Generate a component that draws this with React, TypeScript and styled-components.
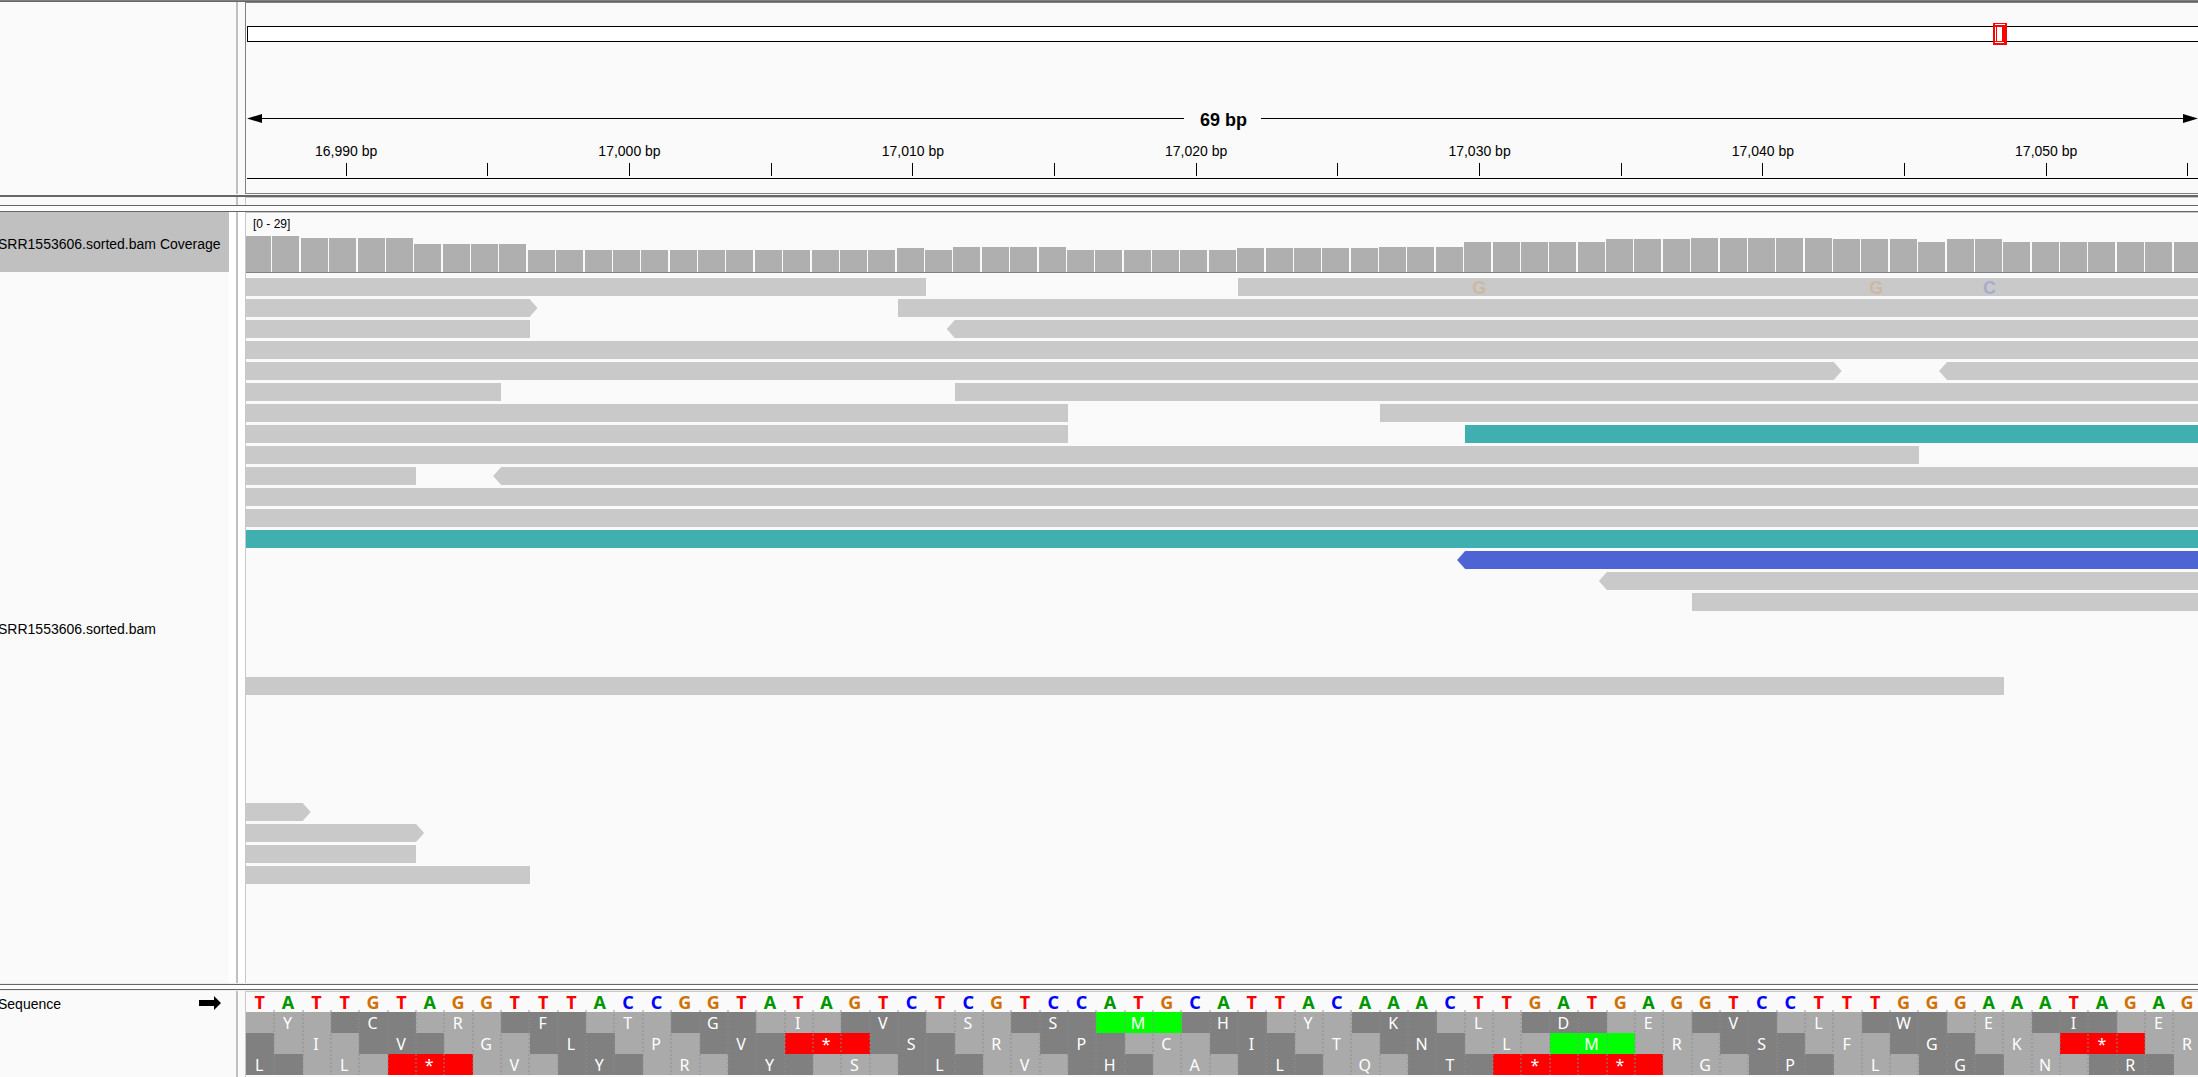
import React from "react";
import styled, { createGlobalStyle } from "styled-components";

/* Number of reference bases that fit across the data panels. */
const VISIBLE_BASES = 68.85;
const bases = (n: number) => `${(n * 100) / VISIBLE_BASES}%`;

const SEQUENCE =
  "TATTGTAGGTTTACCGGTATAGTCTCGTCCATGCATTACAAACTTGATGAGGTCCTTTGGGAAATAGAG";

/* Bar heights as [height, number of bases]. */
const COVERAGE: [number, number][] = [
  [36, 2], [34, 4], [28, 4], [22, 13], [24, 1], [22, 1], [25, 4], [22, 6],
  [24, 5], [25, 3], [30, 5], [33, 3], [34, 5], [33, 3], [30, 1], [33, 2], [30, 7],
];

type Direction = "left" | "right";
interface Mismatch {
  at: number;
  base: string;
}
interface Read {
  start: number;
  end: number;
  arrow?: Direction;
  color?: string;
  mismatches?: Mismatch[];
}

const GREY = "#c9c9c9";
const TEAL = "#3fafaf";
const BLUE = "#4d64d4";
const END = 69;

const READS: Read[][] = [
  [
    { start: 0, end: 24 },
    {
      start: 35,
      end: END,
      mismatches: [
        { at: 43, base: "G" },
        { at: 57, base: "G" },
        { at: 61, base: "C" },
      ],
    },
  ],
  [{ start: 0, end: 10, arrow: "right" }, { start: 23, end: END }],
  [{ start: 0, end: 10 }, { start: 25, end: END, arrow: "left" }],
  [{ start: 0, end: END }],
  [{ start: 0, end: 56, arrow: "right" }, { start: 60, end: END, arrow: "left" }],
  [{ start: 0, end: 9 }, { start: 25, end: END }],
  [{ start: 0, end: 29 }, { start: 40, end: END }],
  [{ start: 0, end: 29 }, { start: 43, end: END, color: TEAL }],
  [{ start: 0, end: 59 }],
  [{ start: 0, end: 6 }, { start: 9, end: END, arrow: "left" }],
  [{ start: 0, end: END }],
  [{ start: 0, end: END }],
  [{ start: 0, end: END, color: TEAL }],
  [{ start: 43, end: END, arrow: "left", color: BLUE }],
  [{ start: 48, end: END, arrow: "left" }],
  [{ start: 51, end: END }],
  [],
  [],
  [],
  [{ start: 0, end: 62 }],
  [],
  [],
  [],
  [],
  [],
  [{ start: 0, end: 2, arrow: "right" }],
  [{ start: 0, end: 6, arrow: "right" }],
  [{ start: 0, end: 6 }],
  [{ start: 0, end: 10 }],
];

/* Reading frames: `skip` is the number of bases of the first codon left of the view. */
const FRAMES = [
  { skip: 0, first: 0, codons: "YCRFTGIVSSMHYKLDEVLWEIE" },
  { skip: 2, first: 1, codons: " IVGLPV*SRPCITNLMRSFGK*R" },
  { skip: 1, first: 1, codons: "LL*VYRYSLVHALQT**GPLGNR " },
];

const TICKS = Array.from({ length: 14 }, (_, i) => ({
  at: 3.5 + i * 5,
  label: i % 2 === 0 ? `${(16990 + i * 5).toLocaleString("en-US")} bp` : "",
}));

const BASE_COLORS: Record<string, string> = {
  A: "#009600",
  C: "#0000ff",
  G: "#d17105",
  T: "#ff0000",
};
const FAINT_COLORS: Record<string, string> = { G: "#cdb8a2", C: "#a9a9cf" };

const GlobalStyle = createGlobalStyle`
  *, *::before, *::after { box-sizing: border-box; }
  body {
    margin: 0;
    background: #fafafa;
    color: #000;
    font: 14px/16px "Liberation Sans", Arial, sans-serif;
  }
`;

const Page = styled.main`
  display: flex;
  flex-direction: column;
  min-height: 100vh;
  overflow: hidden;
`;

const Rule = styled.div<{ $size?: number; $color?: string }>`
  flex: none;
  height: ${(p) => p.$size ?? 1}px;
  background: ${(p) => p.$color ?? "#666"};
`;

const Panel = styled.section<{ $height?: number; $grow?: boolean; $gutter?: string }>`
  display: grid;
  grid-template-columns: 229px 7px 2px 7px minmax(0, 1fr);
  flex: ${(p) => (p.$grow ? "1 0 auto" : "none")};
  min-height: ${(p) => p.$height ?? 0}px;
  background: ${(p) => p.$gutter ?? "#fafafa"};
`;

const Names = styled.div`
  display: flex;
  flex-direction: column;
  overflow: hidden;
  background: #fafafa;
`;

const Divider = styled.div`
  grid-column: 3;
  background: #c0c0c0;
`;

const Data = styled.div<{ $border?: string }>`
  grid-column: 5;
  display: flex;
  flex-direction: column;
  overflow: hidden;
  background: #fafafa;
  border: solid ${(p) => p.$border ?? "#c8c8c8"};
  border-width: 1px 0 0 1px;
`;

const RulerData = styled(Data)`
  border-bottom-width: 1px;
`;

const Chromosome = styled.div`
  display: flex;
  height: 16px;
  margin: 23px 0 0 1px;
  background: #fff;
  border: solid #000;
  border-width: 1px 0 1px 1px;
`;

const Locus = styled.svg`
  flex: none;
  width: 14px;
  height: 22px;
  margin: -4px 0 0 89.5%;
`;

const Span = styled.div`
  display: flex;
  align-items: center;
  height: 20px;
  margin: 66px 0 0 1px;
`;

const SpanLine = styled.div`
  flex: 1;
  height: 1px;
  background: #000;
`;

const ArrowHead = styled.svg`
  flex: none;
  width: 15px;
  height: 9px;
`;

const SpanLabel = styled.div`
  padding: 3px 14px 0 16px;
  font-size: 18px;
  line-height: 20px;
  font-weight: bold;
`;

const Scale = styled.div`
  display: flex;
  height: 50px;
  margin: 1px 0 0 1px;
  border-bottom: 1px solid #000;
  padding-bottom: 2px;
`;

const TickStep = styled.div<{ $width: number }>`
  flex: 0 0 ${(p) => bases(p.$width)};
  display: flex;
  flex-direction: column;
  align-items: center;
  justify-content: flex-end;
  gap: 4px;
  white-space: nowrap;

  &::after {
    content: "";
    width: 1px;
    height: 13px;
    background: #000;
  }
`;

const ScaleLead = styled.div`
  flex: 0 0 ${bases(1)};
`;

const CoverageName = styled.div`
  display: flex;
  align-items: center;
  flex: none;
  height: 60px;
  background: #c0c0c0;
`;

const ReadsName = styled.div`
  display: flex;
  align-items: center;
  flex: 1;
`;

const SequenceName = styled.div`
  display: flex;
  align-items: center;
  justify-content: space-between;
  padding: 2px 8px 0 0;
`;

const TrackLabel = styled.span`
  margin-left: -2px;
  padding-top: 3px;
  white-space: nowrap;
`;

const CoverageTrack = styled.div`
  display: flex;
  flex-direction: column;
  justify-content: space-between;
  flex: none;
  height: 60px;
  padding-top: 4px;
  border-bottom: 1px solid #808080;
`;

const Range = styled.div`
  height: 14px;
  padding-left: 7px;
  font-size: 12px;
  line-height: 14px;
`;

const Bars = styled.div`
  display: flex;
  align-items: flex-end;
  height: 36px;
  margin-left: -2px;
`;

const BarSlot = styled.div`
  flex: 0 0 ${bases(1)};
`;

const Bar = styled.div<{ $height: number }>`
  width: 27px;
  height: ${(p) => p.$height}px;
  background: #afafaf;
`;

const ReadRows = styled.div`
  display: flex;
  flex-direction: column;
  gap: 3px;
  padding: 5px 0;
`;

const ReadRow = styled.div`
  display: flex;
  height: 18px;
`;

const arrowShape = {
  left: "polygon(0 50%, 8px 0, 100% 0, 100% 100%, 8px 100%)",
  right: "polygon(0 0, calc(100% - 8px) 0, 100% 50%, calc(100% - 8px) 100%, 0 100%)",
};

const ReadBar = styled.div<{ $offset: number; $length: number; $arrow?: Direction; $color?: string }>`
  position: relative;
  flex: 0 0 calc(${(p) => bases(p.$length)} + ${(p) => (p.$arrow ? 8 : 0)}px);
  margin-left: calc(${(p) => bases(p.$offset)} - ${(p) => (p.$arrow === "left" ? 8 : 0)}px);
  margin-right: ${(p) => (p.$arrow === "right" ? -8 : 0)}px;
  clip-path: ${(p) => (p.$arrow ? arrowShape[p.$arrow] : "none")};
  background: ${(p) => p.$color ?? GREY};
`;

const MismatchLetter = styled.span<{ $left: number; $width: number; $base: string }>`
  position: absolute;
  top: 0;
  left: ${(p) => p.$left}%;
  width: ${(p) => p.$width}%;
  color: ${(p) => FAINT_COLORS[p.$base]};
  font-size: 18px;
  line-height: 20px;
  font-weight: bold;
  text-align: center;
`;

const SequenceTrack = styled.div`
  position: relative;
`;

const Bases = styled.div`
  display: flex;
  height: 20px;
`;

const Base = styled.span<{ $base: string }>`
  flex: 0 0 ${bases(1)};
  padding-right: 1px;
  color: ${(p) => BASE_COLORS[p.$base]};
  font: bold 18px/20px "Noto Sans", sans-serif;
  text-align: center;
`;

const Codon = styled.span<{ $code: string; $dark: boolean }>`
  flex: 0 0 ${bases(3)};
  padding-right: 2px;
  background: ${(p) =>
    p.$code === "*" ? "#ff0000" : p.$code === "M" ? "#00ff00" : p.$dark ? "#808080" : "#aaaaaa"};
  color: #fff;
  font: 16px/22px "Noto Sans", sans-serif;
  text-align: center;
`;

const Frame = styled.div<{ $skip: number }>`
  display: flex;
  height: 21px;
  overflow: hidden;

  ${Codon}:first-child {
    margin-left: -${(p) => bases(p.$skip)};
  }
`;

const Guides = styled.div`
  position: absolute;
  inset: 18px 0 0 0;
  display: flex;
  overflow: hidden;
`;

const Guide = styled.div`
  display: flex;
  flex: 0 0 ${bases(1)};
  justify-content: flex-end;

  &::after {
    content: "";
    width: 2px;
    margin-right: -1px;
    background: repeating-linear-gradient(rgba(140, 140, 140, 0.45) 0 2px, transparent 2px 4px);
  }
`;

const DirectionArrow = styled.svg`
  flex: none;
  width: 22px;
  height: 14px;
`;

function LocusMarker() {
  return (
    <Locus viewBox="0 0 14 22" shapeRendering="crispEdges" aria-hidden="true">
      <rect width="14" height="22" fill="#f00" />
      <rect x="2" y="1" width="10" height="1" fill="#fff" />
      <rect x="2" y="4" width="1" height="14" fill="#fff" />
      <rect x="4" y="4" width="5" height="14" fill="#fff" />
      <rect x="2" y="19" width="9" height="1" fill="#fff" />
    </Locus>
  );
}

function ReadLine({ reads }: { reads: Read[] }) {
  return (
    <ReadRow>
      {reads.map((read, i) => {
        const length = read.end - read.start;
        return (
          <ReadBar
            key={read.start}
            $offset={read.start - (i > 0 ? reads[i - 1].end : 0)}
            $length={length}
            $arrow={read.arrow}
            $color={read.color}
          >
            {read.mismatches?.map((m) => (
              <MismatchLetter
                key={m.at}
                $base={m.base}
                $left={((m.at - read.start) / length) * 100}
                $width={100 / length}
              >
                {m.base}
              </MismatchLetter>
            ))}
          </ReadBar>
        );
      })}
    </ReadRow>
  );
}

export default function App() {
  const heights = COVERAGE.flatMap(([height, count]) => Array<number>(count).fill(height));
  return (
    <Page>
      <GlobalStyle />
      <Rule $color="#808080" />
      <Rule />
      <Panel $height={192}>
        <Divider />
        <RulerData $border="#808080">
          <Chromosome>
            <LocusMarker />
          </Chromosome>
          <Span>
            <ArrowHead viewBox="0 0 15 9" aria-hidden="true">
              <path d="M0 4.5 L15 0 V9 Z" />
            </ArrowHead>
            <SpanLine />
            <SpanLabel>69 bp</SpanLabel>
            <SpanLine />
            <ArrowHead viewBox="0 0 15 9" aria-hidden="true">
              <path d="M15 4.5 L0 0 V9 Z" />
            </ArrowHead>
          </Span>
          <Scale>
            <ScaleLead />
            {TICKS.map((tick) => (
              <TickStep key={tick.at} $width={5}>
                {tick.label}
              </TickStep>
            ))}
          </Scale>
        </RulerData>
      </Panel>
      <Rule $color="#fafafa" />
      <Rule $size={2} />
      <Panel $height={8}>
        <Divider />
        <Data />
      </Panel>
      <Rule />
      <Rule $size={5} $color="#fdfdfd" />
      <Rule />
      <Panel $grow $gutter="#fff">
        <Names>
          <CoverageName>
            <TrackLabel>SRR1553606.sorted.bam Coverage</TrackLabel>
          </CoverageName>
          <ReadsName>
            <TrackLabel>SRR1553606.sorted.bam</TrackLabel>
          </ReadsName>
        </Names>
        <Divider />
        <Data>
          <CoverageTrack>
            <Range>[0 - 29]</Range>
            <Bars>
              {heights.map((height, i) => (
                <BarSlot key={i}>
                  <Bar $height={height} />
                </BarSlot>
              ))}
            </Bars>
          </CoverageTrack>
          <ReadRows>
            {READS.map((reads, i) => (
              <ReadLine key={i} reads={reads} />
            ))}
          </ReadRows>
        </Data>
      </Panel>
      <Rule $color="#eee" />
      <Rule />
      <Rule $size={4} $color="#fdfdfd" />
      <Rule />
      <Rule $color="#eee" />
      <Panel $height={86}>
        <Names>
          <SequenceName>
            <TrackLabel>Sequence</TrackLabel>
            <DirectionArrow viewBox="0 0 22 14" aria-hidden="true">
              <path d="M0 4 H15 V0 L22 7 L15 14 V10 H0 Z" />
            </DirectionArrow>
          </SequenceName>
        </Names>
        <Divider />
        <Data>
          <SequenceTrack>
            <Bases>
              {SEQUENCE.split("").map((base, i) => (
                <Base key={i} $base={base}>
                  {base}
                </Base>
              ))}
            </Bases>
            {FRAMES.map((frame) => (
              <Frame key={frame.codons} $skip={frame.skip}>
                {frame.codons.split("").map((code, i) => (
                  <Codon key={i} $code={code} $dark={(i + frame.first) % 2 === 1}>
                    {code}
                  </Codon>
                ))}
              </Frame>
            ))}
            <Guides>
              {SEQUENCE.split("").map((_, i) => (
                <Guide key={i} />
              ))}
            </Guides>
          </SequenceTrack>
        </Data>
      </Panel>
    </Page>
  );
}
